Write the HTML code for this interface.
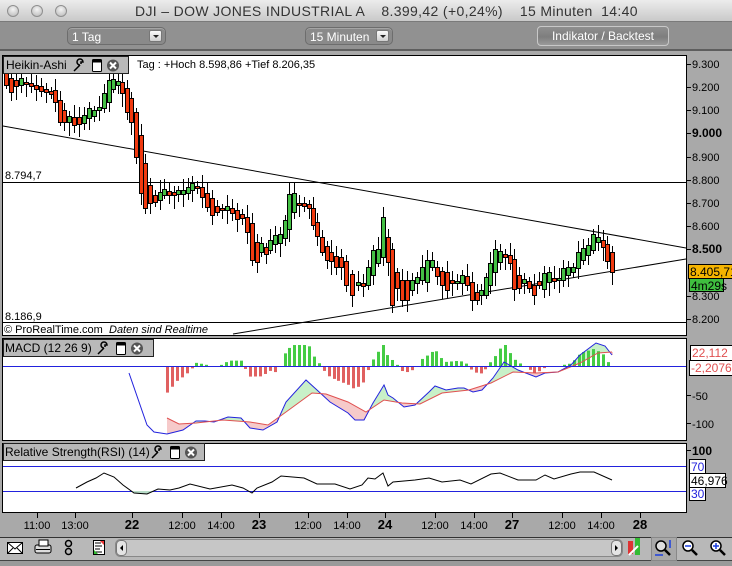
<!DOCTYPE html>
<html><head><meta charset="utf-8"><style>
*{margin:0;padding:0;box-sizing:border-box}
body{width:732px;height:566px;overflow:hidden;background:#a9a9a9;font-family:"Liberation Sans",sans-serif;position:relative}
.abs{position:absolute}
#title{left:0;top:0;width:732px;height:22px;background:linear-gradient(#ececec,#c9c9c9);border-bottom:1px solid #7a7a7a}
.dot{width:12px;height:12px;border-radius:50%;background:radial-gradient(circle at 50% 35%,#f4f4f4,#b5b5b5);border:1px solid #8f8f8f;top:5px}
#title span{position:absolute;left:135px;top:3px;font-size:14px;color:#333;white-space:pre;letter-spacing:0.35px}
#tb{left:0;top:22px;width:732px;height:29px;background:#919191;border-bottom:2px solid #5e5e5e}
.dd{height:18px;top:5px;border:1px solid #6d6d6d;border-radius:5px;background:#8a8a8a;color:#fff;font-size:12px;padding:2px 4px;box-shadow:inset 0 1px 0 #a5a5a5}
.dd i{position:absolute;right:3px;top:2px;width:13px;height:12px;background:linear-gradient(#fafafa,#cfcfcf);border-radius:2px;border:1px solid #777}
.dd i:after{content:"";position:absolute;left:3px;top:4px;border:3px solid transparent;border-top:3px solid #222}
#btn{left:537px;top:26px;width:132px;height:20px;border:1px solid #c8c8c8;border-radius:4px;background:linear-gradient(#8f8f8f 0,#7e7e7e 55%,#9a9a9a 100%);color:#fff;font-size:12px;text-align:center;line-height:18px}
</style></head><body>
<div id="title" class="abs">
<div class="abs dot" style="left:7px"></div><div class="abs dot" style="left:31px"></div><div class="abs dot" style="left:55px"></div>
<span>DJI – DOW JONES INDUSTRIAL A    8.399,42 (+0,24%)    15 Minuten  14:40</span></div>
<div id="tb" class="abs">
<div class="abs dd" style="left:67px;width:99px">1 Tag<i></i></div>
<div class="abs dd" style="left:305px;width:88px">15 Minuten<i></i></div>
</div>
<div id="btn" class="abs">Indikator / Backtest</div>

<svg class="abs" style="left:0;top:51px" width="732" height="515" viewBox="0 51 732 515" font-family="Liberation Sans, sans-serif">
<rect x="0" y="51" width="732" height="515" fill="#a9a9a9"/>
<rect x="2.5" y="55.5" width="684" height="280" fill="#fff" stroke="#000"/>
<rect x="2.5" y="338.5" width="684" height="102" fill="#fff" stroke="#000"/>
<rect x="2.5" y="443.5" width="684" height="69" fill="#fff" stroke="#000"/>
<line x1="3" y1="322.5" x2="686" y2="322.5" stroke="#000"/>
<line x1="3" y1="126" x2="686" y2="248" stroke="#000"/>
<line x1="3" y1="182.5" x2="686" y2="182.5" stroke="#000"/>
<line x1="233" y1="334" x2="686" y2="259" stroke="#000"/>
<g id="candles"></g>
<text x="5" y="179" font-size="11">8.794,7</text>
<text x="5" y="320" font-size="11">8.186,9</text>
<text x="4" y="333" font-size="11">© ProRealTime.com</text>
<text x="109" y="333" font-size="11" font-style="italic">Daten sind Realtime</text>
<g font-size="11" id="pax"></g>
<rect x="688.5" y="264.5" width="44" height="14" fill="#f5b400" stroke="#000"/>
<text x="690" y="276" font-size="12">8.405,71</text>
<rect x="689.5" y="278.5" width="34" height="13" fill="#3fbf3f" stroke="#000"/>
<text x="691" y="290" font-size="12">4m29s</text>
<g id="fillg"></g>
<g id="hist"></g>
<polyline id="blue" fill="none" stroke="#2222dd" stroke-width="1"/>
<polyline id="red" fill="none" stroke="#e05050" stroke-width="1"/>
<line x1="3" y1="366.5" x2="686" y2="366.5" stroke="#2222dd"/>
<rect x="690.5" y="345.5" width="42" height="15" fill="#fff" stroke="#000"/>
<text x="692" y="357" font-size="12" fill="#e05050">22,112</text>
<rect x="689.5" y="360.5" width="43" height="15" fill="#fff" stroke="#000"/>
<text x="691" y="372" font-size="12" fill="#e05050">-2,2076</text>
<line x1="686" y1="395.5" x2="691" y2="395.5" stroke="#000"/><text x="692" y="400" font-size="11">-50</text>
<line x1="686" y1="423.5" x2="691" y2="423.5" stroke="#000"/><text x="692" y="428" font-size="11">-100</text>
<line x1="3" y1="466.5" x2="686" y2="466.5" stroke="#2222dd"/>
<line x1="3" y1="491.5" x2="686" y2="491.5" stroke="#2222dd"/>
<path d="M131 491 L134 493 L147 494 L155 491 Z" fill="#b8dcc8"/>
<polyline id="rsi" fill="none" stroke="#000"/>
<line x1="686" y1="450.5" x2="691" y2="450.5" stroke="#000"/><text x="692" y="455" font-size="12" font-weight="bold">100</text>
<rect x="689.5" y="459.5" width="16" height="14" fill="#fff" stroke="#000"/><text x="691" y="471" font-size="12" fill="#2222dd">70</text>
<rect x="689.5" y="473.5" width="36" height="14" fill="#fff" stroke="#000"/><text x="691" y="485" font-size="12">46,976</text>
<rect x="689.5" y="487.5" width="16" height="13" fill="#fff" stroke="#000"/><text x="691" y="498" font-size="12" fill="#2222dd">30</text>
<g id="tax" font-size="11"></g>
<rect x="0" y="537" width="732" height="29" fill="#b8b8b8"/>
<line x1="0" y1="537.5" x2="732" y2="537.5" stroke="#333"/>
<line x1="0" y1="560.5" x2="732" y2="560.5" stroke="#444"/>
<rect x="0" y="561" width="732" height="5" fill="#9a9a9a"/>
<rect x="7.5" y="542.5" width="15" height="11" fill="#fff" stroke="#000"/><path d="M7.5 542.5 L15 549 L22.5 542.5 M7.5 553.5 L13 548 M22.5 553.5 L17 548" fill="none" stroke="#000"/>
<rect x="35" y="545" width="16" height="8" rx="2" fill="#ddd" stroke="#000"/><rect x="39" y="540" width="9" height="6" fill="#fff" stroke="#000"/><line x1="36" y1="549.5" x2="50" y2="549.5" stroke="#000"/>
<rect x="65.5" y="540.5" width="6" height="6" rx="3" fill="none" stroke="#000" stroke-width="1.5"/><rect x="65.5" y="548.5" width="6" height="6" rx="3" fill="none" stroke="#000" stroke-width="1.5"/>
<rect x="93.5" y="540.5" width="11" height="14" fill="#fff" stroke="#000"/><path d="M95 543h6M95 546h7M95 549h5M95 552h7" stroke="#000"/><path d="M100 541l4 0 0 4z" fill="#e33"/><path d="M94 554l0-4 4 4z" fill="#3b3"/>
<rect x="115.5" y="539.5" width="507" height="17" rx="5" fill="#c6c6c6" stroke="#888"/>
<rect x="116.5" y="540.5" width="10" height="15" rx="4" fill="#e4e4e4" stroke="#777"/><path d="M123 545l-3 3 3 3z" fill="#000"/>
<rect x="611.5" y="540.5" width="10" height="15" rx="4" fill="#e4e4e4" stroke="#777"/><path d="M615 545l3 3-3 3z" fill="#000"/>
<rect x="628" y="541" width="5" height="13" fill="#d33"/><rect x="635" y="538" width="5" height="17" fill="#3b3"/><path d="M629 555l9-9" stroke="#fff" stroke-width="2"/>
<rect x="651.5" y="537.5" width="25" height="23" fill="#a8a8a8" stroke="#888"/>
<circle cx="661" cy="546" r="5" fill="#ddd" stroke="#000" stroke-width="1.5"/><path d="M665 550l5 5" stroke="#000" stroke-width="2.5"/><path d="M655 555h8M670 540v8" stroke="#1a3fe0" stroke-width="1.5"/>
<circle cx="688" cy="546" r="5" fill="#fff" stroke="#000" stroke-width="1.5"/><path d="M685 546h6" stroke="#1a3fe0" stroke-width="1.5"/><path d="M692 550l5 5" stroke="#000" stroke-width="2.5"/>
<circle cx="716" cy="546" r="5" fill="#fff" stroke="#000" stroke-width="1.5"/><path d="M713 546h6M716 543v6" stroke="#1a3fe0" stroke-width="1.5"/><path d="M720 550l5 5" stroke="#000" stroke-width="2.5"/>
<g font-size="12">
<rect x="3.5" y="56.5" width="125" height="17" fill="#b9b9b9" stroke="#222"/><text x="6" y="69">Heikin-Ashi</text>
<rect x="3.5" y="339.5" width="150" height="17" fill="#b9b9b9" stroke="#222"/><text x="5" y="352">MACD (12 26 9)</text>
<rect x="3.5" y="443.5" width="201" height="17" fill="#b9b9b9" stroke="#222"/><text x="5" y="456">Relative Strength(RSI) (14)</text>
</g>
<g id="icons"></g>
<text x="137" y="68" font-size="11">Tag : +Hoch 8.598,86 +Tief 8.206,35</text>
</svg>
<script>
var NS="http://www.w3.org/2000/svg";
function el(p,t,a){var e=document.createElementNS(NS,t);for(var k in a)e.setAttribute(k,a[k]);p.appendChild(e);return e;}
var C=[[6,73,85,'r'],[11,78,92,'r'],[16,80,86,'r'],[21,78,85,'g'],[26,82,84,'r'],[31,83,86,'r'],[36,85,89,'r'],[41,86,91,'r'],[46,89,92,'r'],[51,91,94,'r'],[55,90,102,'r'],[60,100,122,'r'],[64,110,122,'r'],[69,116,122,'g'],[74,117,125,'r'],[79,117,124,'r'],[84,115,123,'g'],[89,108,118,'g'],[94,110,116,'g'],[99,107,110,'g'],[104,93,108,'g'],[109,80,102,'g'],[113,79,89,'g'],[118,81,85,'g'],[122,82,93,'r'],[127,88,112,'r'],[131,98,122,'r'],[136,112,157,'r'],[141,135,193,'r'],[145,163,208,'r'],[150,185,203,'r'],[155,195,202,'r'],[160,192,200,'g'],[164,189,195,'g'],[169,191,195,'r'],[174,192,195,'r'],[178,190,194,'g'],[183,190,194,'g'],[188,187,193,'g'],[192,183,190,'g'],[197,186,188,'r'],[202,187,197,'r'],[207,193,207,'r'],[212,198,215,'r'],[217,206,212,'r'],[222,208,210,'r'],[227,206,210,'g'],[232,208,213,'r'],[237,210,219,'r'],[242,214,218,'r'],[247,217,232,'r'],[252,223,260,'r'],[257,242,262,'r'],[261,243,252,'g'],[266,247,254,'r'],[270,240,250,'g'],[275,235,244,'g'],[280,234,243,'g'],[285,220,238,'g'],[289,194,229,'g'],[294,193,212,'g'],[299,203,205,'r'],[304,203,206,'r'],[309,204,208,'r'],[313,208,225,'r'],[317,222,236,'r'],[322,237,252,'r'],[327,246,260,'r'],[331,252,261,'r'],[336,256,267,'r'],[341,257,267,'r'],[346,261,285,'r'],[352,274,295,'r'],[358,282,285,'g'],[363,283,286,'r'],[368,267,285,'g'],[373,250,275,'g'],[378,249,263,'g'],[383,217,257,'g'],[388,237,262,'r'],[392,249,305,'r'],[397,272,288,'r'],[402,280,300,'r'],[407,280,300,'r'],[412,280,290,'g'],[417,277,283,'g'],[422,267,280,'g'],[427,260,282,'g'],[432,260,267,'g'],[437,267,276,'r'],[442,271,285,'r'],[447,272,290,'r'],[452,280,283,'r'],[457,281,283,'g'],[462,275,283,'g'],[467,276,285,'r'],[472,282,300,'r'],[477,292,300,'r'],[481,290,295,'g'],[486,277,295,'g'],[490,263,285,'g'],[495,249,272,'g'],[500,251,262,'g'],[505,254,257,'r'],[510,255,263,'r'],[514,259,289,'r'],[519,275,288,'r'],[524,279,283,'g'],[529,281,288,'r'],[534,285,295,'r'],[539,281,285,'r'],[544,273,289,'g'],[549,272,282,'g'],[554,278,281,'r'],[559,278,280,'g'],[563,268,280,'g'],[568,267,275,'g'],[573,267,272,'g'],[578,252,268,'g'],[583,248,260,'g'],[588,245,255,'g'],[593,234,250,'g'],[598,237,242,'g'],[603,240,247,'r'],[607,244,261,'r'],[612,252,272,'r']];
var g=document.getElementById('candles');
C.forEach(function(c,i){var w1=c[1]-4-((i*7)%9),w2=c[2]+4+((i*5)%11);
el(g,'line',{x1:c[0]+.5,y1:Math.max(w1,57),x2:c[0]+.5,y2:w2,stroke:'#000'});
el(g,'rect',{x:c[0]-1.5,y:c[1]+.5,width:4,height:Math.max(c[2]-c[1],2),fill:c[3]=='r'?'#f03a10':'#44c044',stroke:'#000'});});
var P=document.getElementById('pax');
[['9.300',64],['9.200',87],['9.100',110],['9.000',133,1],['8.900',157],['8.800',180],['8.700',203],['8.600',226],['8.500',249,1],['8.300',296],['8.200',319]].forEach(function(p){
el(P,'line',{x1:686,y1:p[1]+.5,x2:691,y2:p[1]+.5,stroke:'#000'});
var t=el(P,'text',{x:692,y:p[1]+4,'font-size':p[2]?12:11,'font-weight':p[2]?'bold':'normal'});t.textContent=p[0];});
function pts(a){return a.map(function(p){return p.join(',')}).join(' ');}
var B=[[129,373],[147,425],[154,432],[167,434],[183,430],[196,421],[205,421],[214,422],[228,417],[241,418],[250,428],[263,430],[277,422],[286,402],[306,380],[317,390],[330,402],[348,413],[355,420],[364,420],[373,403],[384,385],[388,395],[393,398],[404,407],[415,405],[429,392],[435,386],[446,390],[458,388],[464,388],[473,392],[482,390],[493,378],[504,362],[518,370],[536,377],[545,373],[558,372],[571,365],[580,355],[596,343],[605,346],[612,355]];
var R=[[167,418],[179,424],[196,423],[223,420],[250,422],[268,425],[286,412],[312,393],[326,394],[348,402],[366,412],[384,400],[402,403],[420,404],[442,393],[469,390],[491,383],[513,372],[536,373],[558,372],[580,363],[598,353],[612,352]];
document.getElementById('blue').setAttribute('points',pts(B));
document.getElementById('red').setAttribute('points',pts(R));
function interp(A,x){for(var i=1;i<A.length;i++)if(A[i][0]>=x){var a=A[i-1],b=A[i];return a[1]+(b[1]-a[1])*(x-a[0])/(b[0]-a[0]);}return A[A.length-1][1];}
var H=document.getElementById('hist'),F=document.getElementById('fillg');
for(var x=167;x<=612;x+=1){var b=interp(B,x),r=interp(R,x);
el(F,'line',{x1:x+.5,y1:Math.min(b,r),x2:x+.5,y2:Math.max(b,r),stroke:(r-b)>0?'#c8f0c8':'#f6caca'});}
for(var x=167;x<=612;x+=4.9){var b=interp(B,x),r=interp(R,x),h=(r-b)*1.6;
if(Math.abs(h)<1)continue;if(h>21)h=21;
el(H,'rect',{x:Math.round(x)-1,y:h>0?366-h:367,width:3,height:Math.abs(h),fill:h>0?'#44cc44':'#e06060'});}
var RS=[[76,488],[87,482],[96,478],[104,473],[114,477],[123,485],[134,493],[147,494],[158,489],[170,490],[179,488],[190,484],[210,489],[232,485],[243,488],[252,493],[257,488],[272,482],[281,476],[304,478],[317,484],[335,484],[350,489],[362,485],[368,478],[375,479],[383,473],[388,486],[393,482],[415,480],[429,478],[442,482],[460,480],[471,484],[491,474],[500,473],[518,480],[536,480],[545,475],[554,479],[571,474],[580,472],[594,472],[612,480]];
document.getElementById('rsi').setAttribute('points',pts(RS));
var T=document.getElementById('tax');
[['11:00',37],['13:00',75],['22',132,1],['12:00',182],['14:00',221],['23',259,1],['12:00',308],['14:00',347],['24',385,1],['12:00',435],['14:00',474],['27',512,1],['12:00',562],['14:00',601],['28',640,1]].forEach(function(p){
el(T,'line',{x1:p[1]+.5,y1:513,x2:p[1]+.5,y2:518,stroke:'#000'});
var t=el(T,'text',{x:p[1],y:529,'text-anchor':'middle','font-size':p[2]?13:11,'font-weight':p[2]?'bold':'normal'});t.textContent=p[0];});
var I=document.getElementById('icons');
[[73,57],[97,340],[151,444]].forEach(function(q){var x=q[0],y=q[1];
el(I,'path',{d:'M'+(x+1)+' '+(y+14)+' l6 -6 m0 0 a3 3 0 1 1 3 -3 l-2 0 0 2',fill:'none',stroke:'#000','stroke-width':1.5});
el(I,'rect',{x:x+19.5,y:y+2.5,width:9,height:12,rx:1,fill:'#fff',stroke:'#000'});
el(I,'rect',{x:x+19.5,y:y+2.5,width:9,height:3,fill:'#000'});
el(I,'circle',{cx:x+40,cy:y+8.5,r:6,fill:'#555'});
el(I,'path',{d:'M'+(x+37)+' '+(y+5.5)+'l6 6m0 -6l-6 6',stroke:'#fff','stroke-width':2});});
</script>
</body></html>
